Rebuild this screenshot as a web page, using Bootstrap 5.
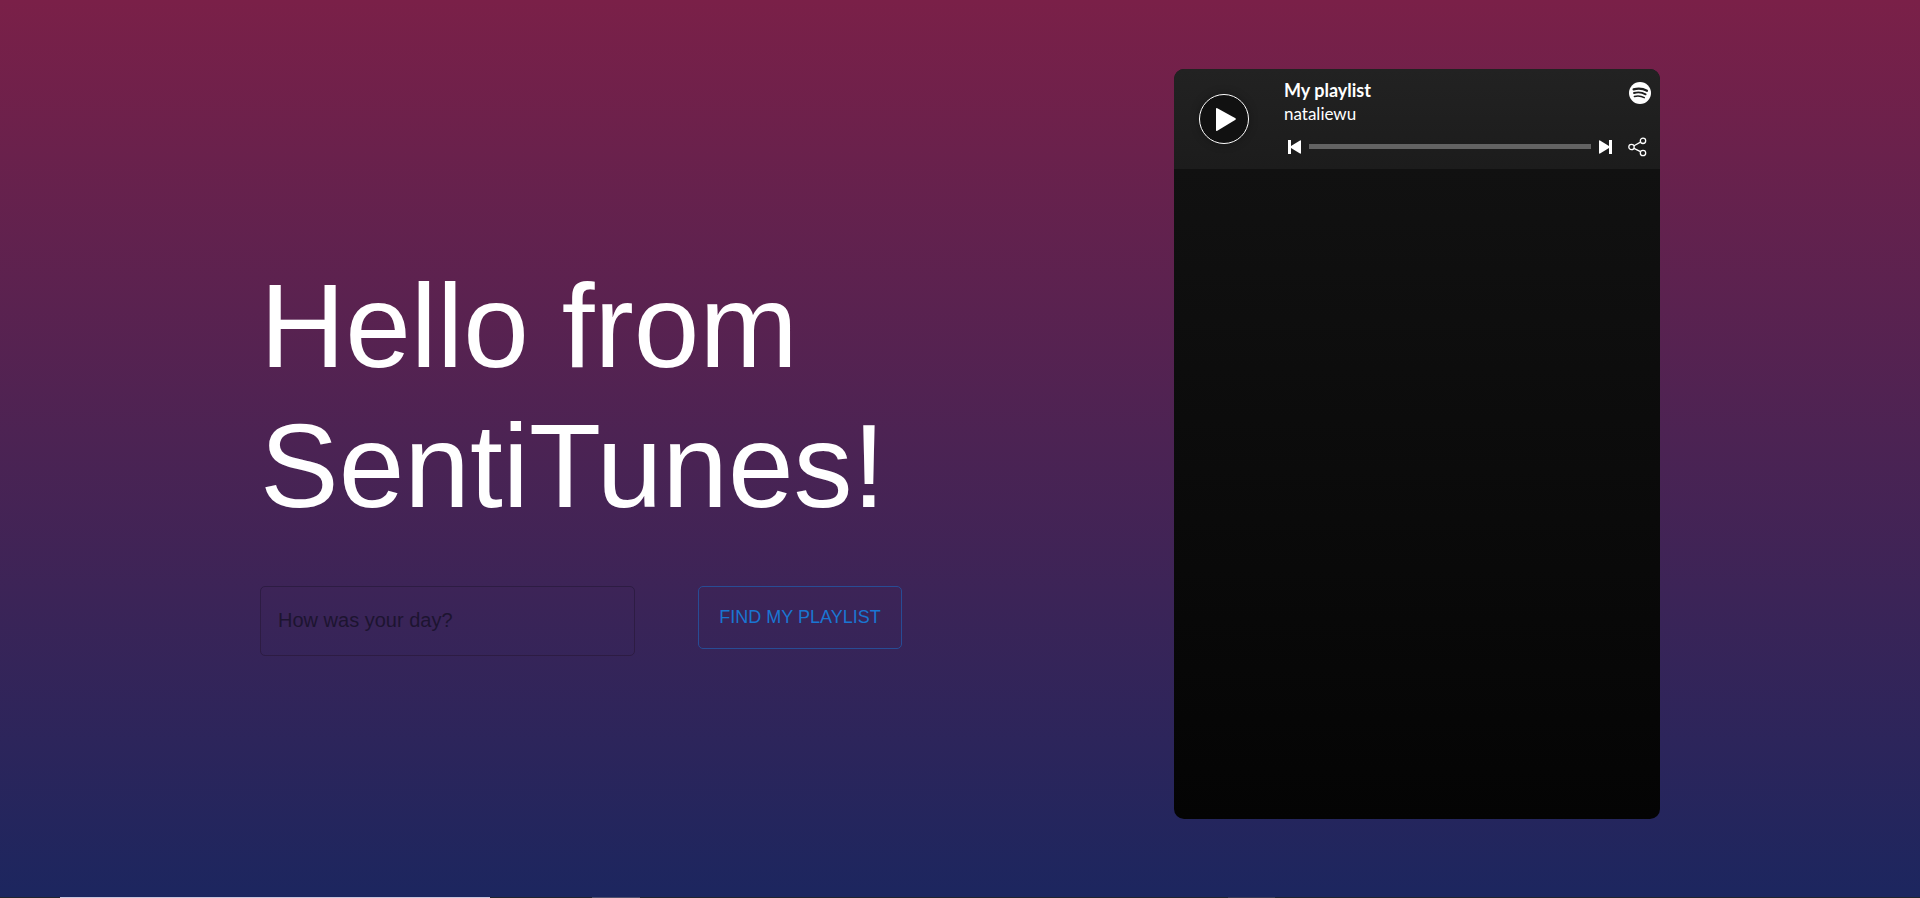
<!DOCTYPE html>
<html lang="en">
<head>
<meta charset="utf-8">
<meta name="viewport" content="width=device-width, initial-scale=1">
<title>SentiTunes</title>
<link href="https://cdn.jsdelivr.net/npm/bootstrap@5.3.0/dist/css/bootstrap.min.css" rel="stylesheet">
<style>
  body {
    font-family: "Liberation Sans", Arial, sans-serif;
    background: linear-gradient(#7a2048, #1c265f) no-repeat;
  }
  .stage { padding-bottom: 10px; }
  .page-wrap { max-width: 1424px; }
  .hero { padding-top: 24px; }
  .hero-title { font-size: 118px; line-height: 140px; font-weight: 400; margin-bottom: 50px; }
  .mood-form { gap: 63px; }
  .mood-input.form-control {
    width: 375px; height: 70px; padding: 0 17px;
    font-size: 20px; color: #1b1231;
    background: transparent; border-color: #2d1c43; border-radius: 5px;
  }
  .mood-input::placeholder { color: #1d1430; opacity: 1; }
  .find-btn.btn {
    width: 204px; height: 63px; padding: 0;
    font-size: 18px; color: #1976d2;
    border: 1px solid #284c95; border-radius: 5px;
  }
  .player {
    width: 486px; height: 750px; border-radius: 10px;
    background: linear-gradient(#131313, #040404);
    font-family: Lato, sans-serif;
  }
  .player-head { height: 100px; background: linear-gradient(#222, #1c1c1c); }
  .play-cell { width: 110px; padding-left: 25px; }
  .play-btn { width: 50px; height: 50px; background: #111; border: 1px solid #fff; box-shadow: 0 0 10px rgba(0, 0, 0, .3); }
  .player-info { padding: 9px 9px 0 0; }
  .track-name { font-size: 18px; line-height: 24px; }
  .track-owner { font-size: 17px; line-height: 24px; }
  .controls { height: 24px; margin-top: 9px; }
  .icon-btn { background: none; border: 0; padding: 0; display: flex; }
  .seek { height: 5px; margin: 0 8px; background: #636363; }
  .dock { height: 1px; background: #20262f; }
  .dock span { height: 1px; }
  .dock-main { margin-left: 60px; width: 430px; background: #c9c5da; }
  .dock-second { margin-left: 102px; width: 48px; background: #50526c; }
  .dock-third { margin-left: 588px; width: 47px; background: #3b3d52; }
</style>
</head>
<body class="min-vh-100 d-flex flex-column">
  <main class="stage flex-grow-1 d-flex align-items-center">
    <div class="page-wrap container-fluid d-flex align-items-center justify-content-between flex-wrap flex-xl-nowrap">
      <section class="hero">
        <h1 class="hero-title text-white">Hello from<br>SentiTunes!</h1>
        <form class="mood-form d-flex align-items-start">
          <input class="mood-input form-control" type="text" placeholder="How was your day?" aria-label="How was your day?">
          <button class="find-btn btn text-uppercase" type="button">Find my playlist</button>
        </form>
      </section>

      <section class="player overflow-hidden text-white flex-shrink-0" aria-label="Playlist player">
        <div class="player-head d-flex">
          <div class="play-cell d-flex align-items-center">
            <button class="play-btn rounded-circle p-0 d-flex" type="button" aria-label="Play">
              <svg width="48" height="48" viewBox="0 0 48 48" fill="#fff"><path d="M16 14Q16 12.500 17.300 13.200L35.500 23.300Q36.300 24 35.500 24.700L17.300 35.800Q16 36.500 16 35z"/></svg>
            </button>
          </div>
          <div class="player-info flex-grow-1">
            <div class="d-flex justify-content-between">
              <div>
                <div class="track-name fw-bold">My playlist</div>
                <div class="track-owner">nataliewu</div>
              </div>
              <a class="d-block pt-1" href="#" aria-label="Open in Spotify">
                <svg class="d-block" width="22" height="22" viewBox="0 0 22 22" fill="none" stroke="#1e1e1e" stroke-linecap="round">
                  <circle cx="11" cy="11" r="11" fill="#fff" stroke="none"/>
                  <path stroke-width="2.200" d="M4.600 7.400C9 6.200 14 6.600 18 8.800"/>
                  <path stroke-width="1.900" d="M5 11C9 9.900 13 10.300 16.600 12.300"/>
                  <path stroke-width="1.500" d="M5.400 14.400C9 13.600 12.300 13.900 15.300 15.700"/>
                </svg>
              </a>
            </div>
            <div class="controls d-flex align-items-center">
              <button class="icon-btn ms-1" type="button" aria-label="Previous">
                <svg width="13" height="14" viewBox="0 0 13 14" fill="#fff"><path d="M0 0h3v6L12 0.500Q13 0 13 1v12Q13 14 12 13.500L3 8v6H0z"/></svg>
              </button>
              <div class="seek flex-grow-1"></div>
              <button class="icon-btn" type="button" aria-label="Next">
                <svg width="13" height="14" viewBox="0 0 13 14" fill="#fff"><path d="M13 0h-3v6L1 0.500Q0 0 0 1v12Q0 14 1 13.500L10 8v6h3z"/></svg>
              </button>
              <button class="icon-btn ms-3 me-1" type="button" aria-label="Share">
                <svg width="19" height="20" viewBox="0 0 19 20" fill="none" stroke="#fff" stroke-width="1.300">
                  <circle cx="3.500" cy="10" r="2.700"/><circle cx="15" cy="3.800" r="2.700"/><circle cx="15" cy="16" r="2.700"/>
                  <path d="M6 8.700L12.500 5.100M6 11.300L12.500 14.700"/>
                </svg>
              </button>
            </div>
          </div>
        </div>
      </section>
    </div>
  </main>
  <div class="dock d-flex overflow-hidden">
    <span class="dock-main flex-shrink-0"></span>
    <span class="dock-second flex-shrink-0"></span>
    <span class="dock-third flex-shrink-0"></span>
  </div>
  <script src="https://cdn.jsdelivr.net/npm/bootstrap@5.3.0/dist/js/bootstrap.bundle.min.js"></script>
</body>
</html>
